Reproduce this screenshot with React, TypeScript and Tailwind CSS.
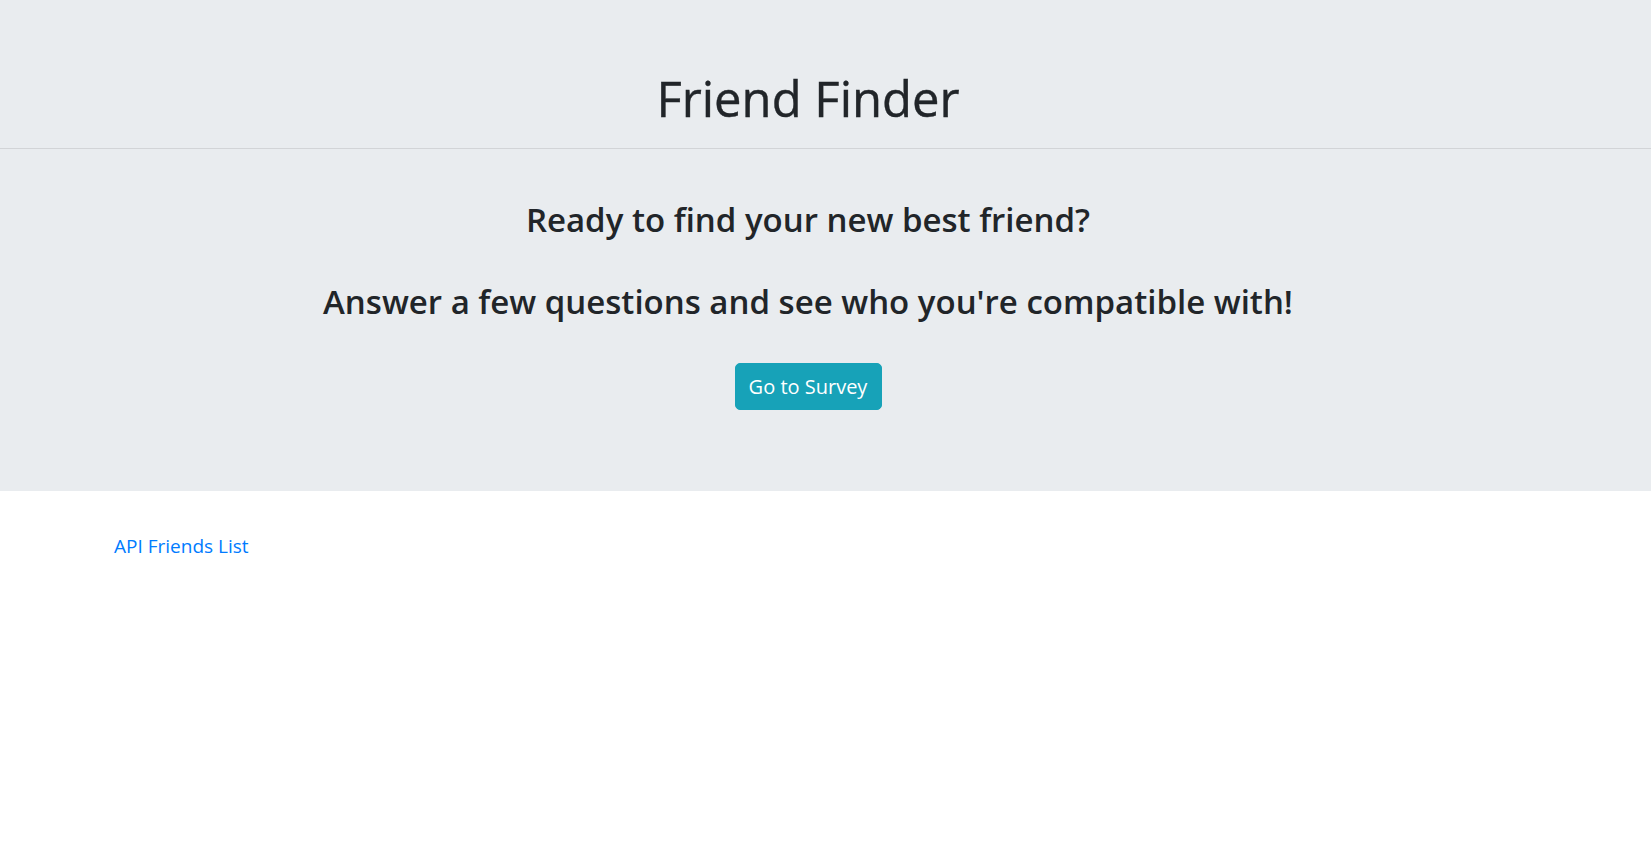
import React from 'react';

const App: React.FC = () => {
    return (
        <div className="min-h-screen bg-white text-[#212529]" style={{ fontFamily: '"Open Sans", "Noto Sans", sans-serif' }}>
            {/* Jumbotron */}
            <div className="bg-[#e9ecef] text-center pt-[66px] pb-[81px]">
                <div className="pr-[35px]">
                    <h1 className="text-[49px] leading-[64px] font-normal [-webkit-text-stroke:0.4px_#212529]">Friend Finder</h1>
                </div>
                <hr className="mt-[18px] border-0 border-t border-[#d2d4d7]" />
                <div className="pr-[35px]">
                    <h2 className="mt-[51px] text-[33px] leading-[40px] font-semibold">Ready to find your new best friend?</h2>
                    <h2 className="mt-[42px] text-[33px] leading-[40px] font-semibold">Answer a few questions and see who you're compatible with!</h2>
                    <div className="mt-[41px] flex justify-center">
                        <a
                            href="#"
                            className="h-[47px] w-[147px] flex items-center justify-center bg-[#17a2b8] border border-[#17a2b8] rounded-[5px] text-white text-[20px]"
                        >
                            Go to Survey
                        </a>
                    </div>
                </div>
            </div>

            <div className="pl-[114px] mt-[43px]">
                <a href="#" className="text-[#007bff] text-[19px] leading-[24px]">API Friends List</a>
            </div>
        </div>
    );
};

export default App;
